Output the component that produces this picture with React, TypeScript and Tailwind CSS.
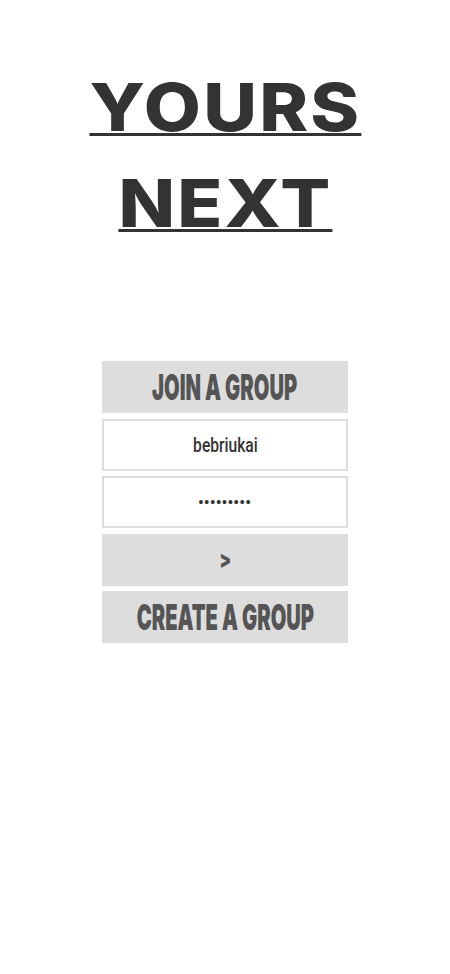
import { useState } from "react";

const App = () => {
  const [name] = useState("bebriukai");

  return (
    <div className="min-h-[974px] w-full bg-white flex flex-col items-center">
      {/* Logo */}
      <h1 className="pt-[59px] text-center font-['Inter',sans-serif] font-extrabold text-[66px] leading-[96px] tracking-[2px] text-[#333] underline decoration-[3px] underline-offset-[2px] scale-x-[1.12]">
        <span className="block">YOURS</span>
        <span className="block">NEXT</span>
      </h1>

      {/* Join form */}
      <div className="mt-[110px] w-[246px] flex flex-col gap-[5.5px]">
        <div className="h-[52px] bg-[#ddd] flex items-center justify-center overflow-hidden">
          <span className="inline-block scale-x-[0.56] whitespace-nowrap font-['Inter',sans-serif] font-black text-[36px] leading-none text-[#555]">
            JOIN A GROUP
          </span>
        </div>
        <label className="h-[52px] border-2 border-[#ddd] bg-white flex items-center justify-center overflow-hidden">
          <span className="inline-block scale-x-[0.78] whitespace-nowrap font-['Roboto',sans-serif] font-medium text-[20px] leading-none text-[#333]">
            {name}
          </span>
        </label>
        <label className="h-[52px] border-2 border-[#ddd] bg-white flex items-center justify-center">
          <span className="font-['Liberation_Sans',sans-serif] text-[14px] tracking-[1px] leading-none text-[#333]">
            •••••••••
          </span>
        </label>
        <button className="h-[52px] bg-[#ddd] flex items-center justify-center">
          <span className="inline-block scale-x-[0.7] font-['Inter',sans-serif] font-black text-[24px] leading-none text-[#555]">
            &gt;
          </span>
        </button>
        <button className="h-[52px] bg-[#ddd] flex items-center justify-center overflow-hidden">
          <span className="inline-block scale-x-[0.56] whitespace-nowrap font-['Inter',sans-serif] font-black text-[36px] leading-none text-[#555]">
            CREATE A GROUP
          </span>
        </button>
      </div>
    </div>
  );
};

export default App;
